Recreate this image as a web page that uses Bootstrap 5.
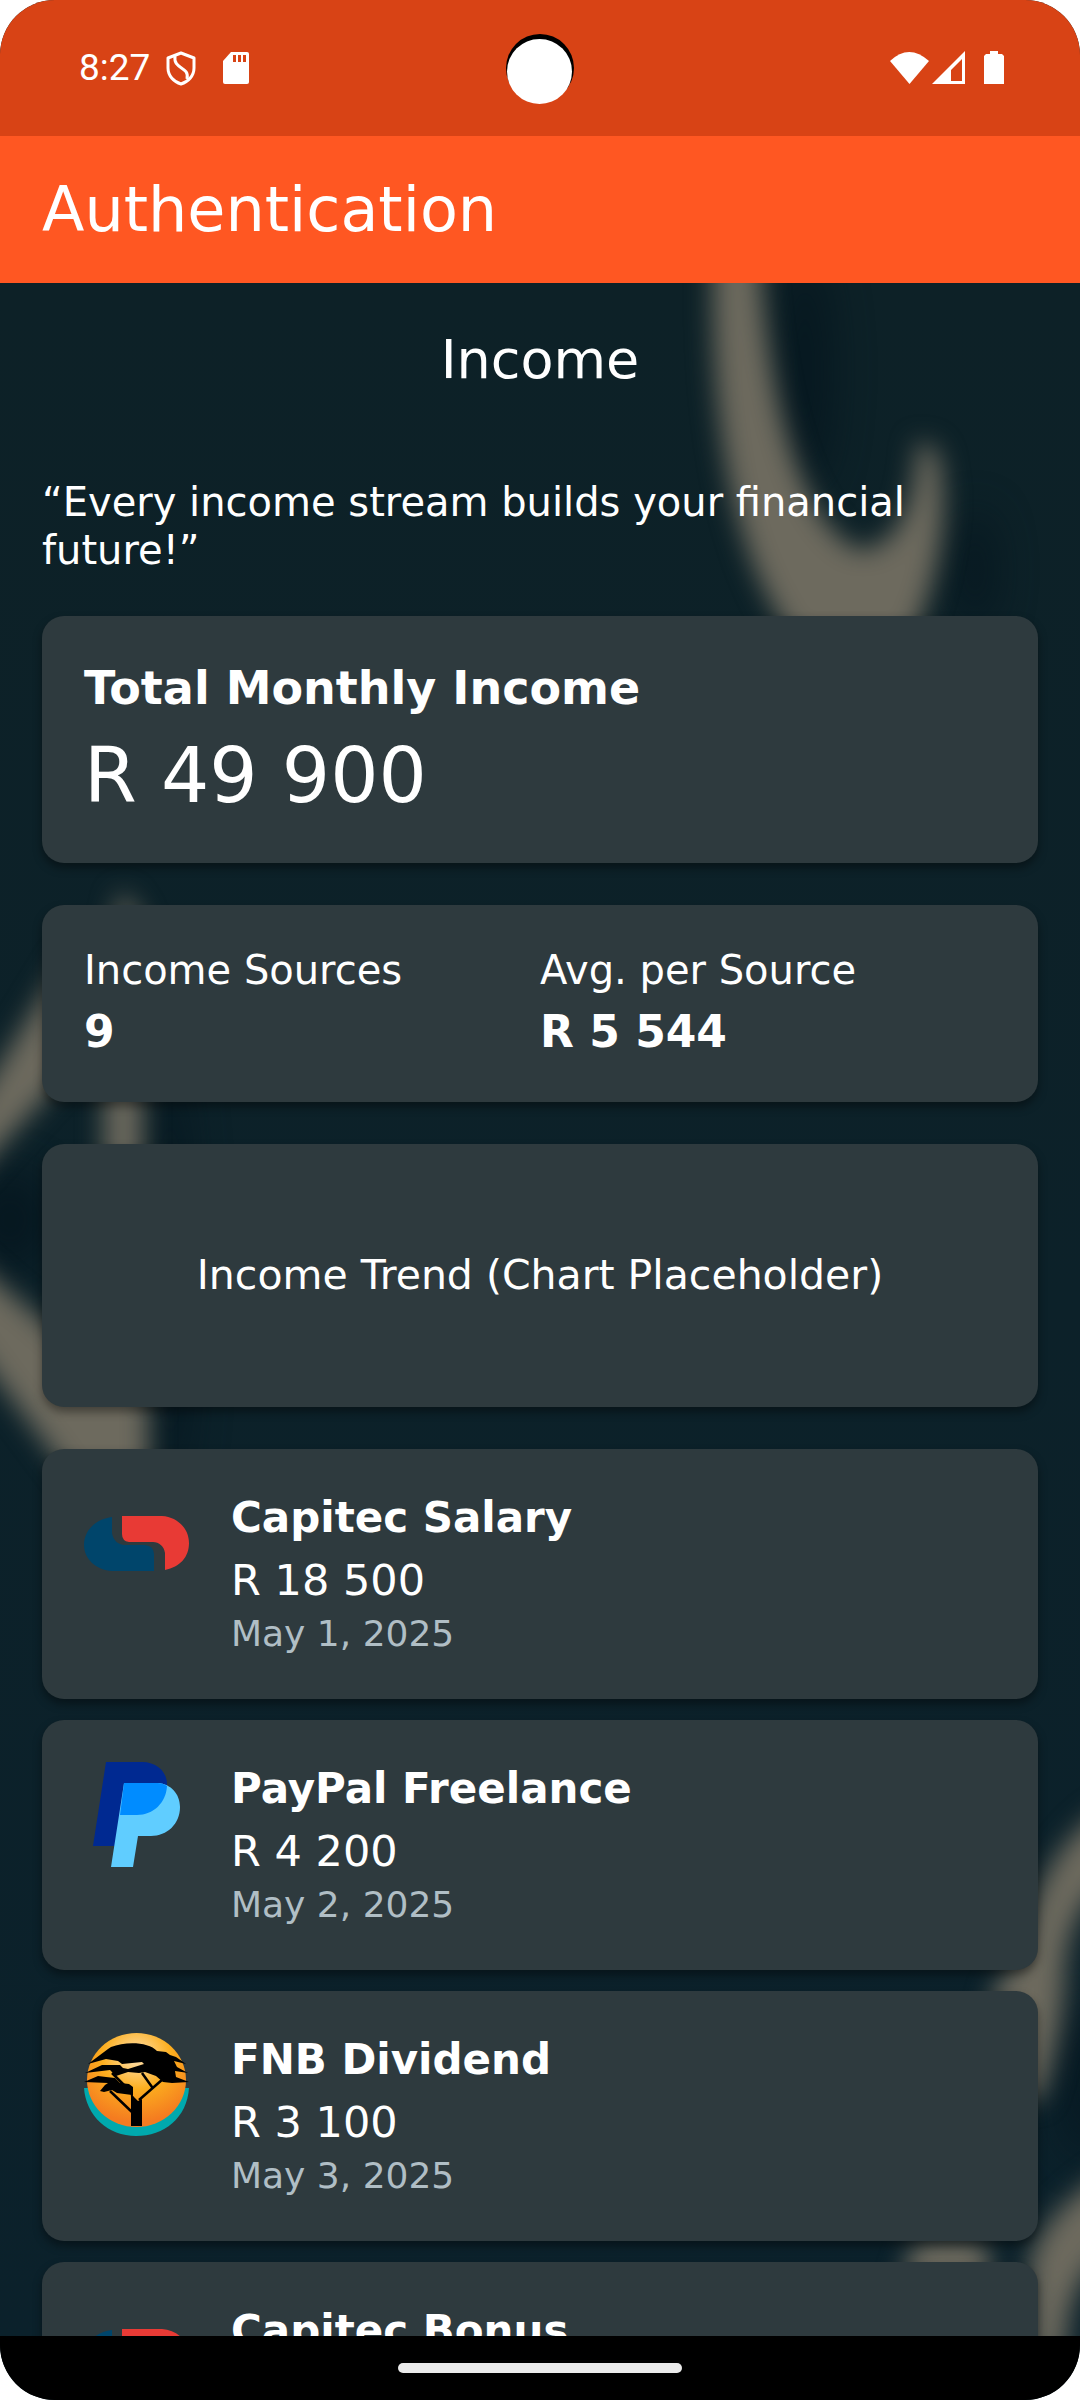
<!DOCTYPE html>
<html lang="en">
<head>
<meta charset="utf-8">
<meta name="viewport" content="width=device-width, initial-scale=1">
<title>Income</title>
<link rel="stylesheet" href="https://cdn.jsdelivr.net/npm/bootstrap@5.3.0/dist/css/bootstrap.min.css">
<style>
  body { background: #fff; font-family: "DejaVu Sans", sans-serif; color: #fff; }
  .phone { height: 100vh; border-radius: 55px; background: #0c2027; }
  .status-bar { height: 136px; padding: 0 74px 0 79px; background: #d84315; font-family: Roboto, sans-serif; font-size: 37px; line-height: 46px; }
  .camera { top: 34px; left: 50%; width: 68px; height: 68px; margin-left: -34px; background: #000; }
  .camera::after { content: ""; position: absolute; top: 5px; left: 1px; width: 65px; height: 65px; border-radius: 50%; background: #fff; }
  .app-bar { height: 147px; padding: 0 42px; background: #ff5722; font-size: 62px; line-height: 70px; }
  .screen { padding: 42px 42px 0; }
  .backdrop { inset: 0; width: 100%; height: 100%; }
  .screen-title { font-size: 54px; line-height: 70px; margin-bottom: 83px; }
  .body-text { font-size: 40px; line-height: 48px; }
  .quote { margin-bottom: 42px; }
  .panel { --bs-card-bg: #2e3a3e; --bs-card-color: #fff; --bs-card-border-width: 0; --bs-card-border-radius: 22px; padding: 42px; margin-bottom: 42px; box-shadow: 0 5px 10px rgba(0, 0, 0, .4); flex-shrink: 0; }
  .total-label { font-size: 46px; line-height: 60px; }
  .total-value { font-size: 76px; line-height: 90px; margin-top: 13px; }
  .stat-label { font-size: 40px; line-height: 46px; }
  .stat-value { font-size: 44px; line-height: 56px; margin-top: 11px; }
  .trend { height: 263px; font-size: 41px; }
  .entry { gap: 42px; margin-bottom: 21px; min-height: 250px; }
  .entry svg { width: 105px; height: 105px; flex-shrink: 0; }
  .entry-name { font-size: 42px; line-height: 54px; }
  .entry-amount { font-size: 43px; line-height: 54px; margin-top: 8px; }
  .entry-date { font-size: 36px; line-height: 46px; margin-top: 4px; color: #b0bec5; }
  .gesture-bar { height: 64px; background: #000; flex-shrink: 0; }
  .gesture-pill { width: 284px; height: 10px; background: #ebebeb; }
</style>
<script src="https://cdn.jsdelivr.net/npm/bootstrap@5.3.0/dist/js/bootstrap.bundle.min.js"></script>
</head>
<body>
<div class="phone d-flex flex-column overflow-hidden">

  <div class="status-bar position-relative d-flex align-items-center justify-content-between flex-shrink-0">
    <div class="d-flex align-items-center">
      <span>8:27</span>
      <svg class="ms-3" width="30" height="35" viewBox="0 0 30 35" fill="none" stroke="#fff" stroke-width="3" stroke-linejoin="round" aria-hidden="true">
        <path d="M15 2 28 7V17C28 25 22 31 15 33 8 31 2 25 2 17V7Z"/>
        <path d="M9 5C7 19 24 15 21 28"/>
      </svg>
      <svg class="ms-4" width="38" height="34" viewBox="4 0 38 34" aria-hidden="true">
        <path fill="#fff" d="M15 1H31Q33 1 33 3V31Q33 33 31 33H9Q7 33 7 31V10Z"/>
        <path fill="#d84315" d="M17 4h3v7h-3zM22 4h3v7h-3zM27 4h3v7h-3z"/>
      </svg>
    </div>
    <div class="camera position-absolute rounded-circle"></div>
    <svg width="116" height="34" viewBox="0 0 116 34" fill="#fff" aria-hidden="true">
      <path d="M0 10Q19 -8 39 10L19.500 33Z"/>
      <path fill-rule="evenodd" d="M42 33 75 0V33ZM61 19V30H72V8Z"/>
      <path d="M100 0h8v3h4l2 2v28H94V5l2-2h4Z"/>
    </svg>
  </div>

  <header class="app-bar d-flex align-items-center flex-shrink-0">Authentication</header>

  <main class="screen position-relative d-flex flex-column flex-grow-1 overflow-hidden">
    <svg class="backdrop position-absolute" viewBox="0 283 1080 2053" preserveAspectRatio="xMidYMin slice" aria-hidden="true">
      <defs>
        <filter id="soft" x="-20%" y="-20%" width="140%" height="140%" color-interpolation-filters="sRGB"><feGaussianBlur stdDeviation="13"/></filter>
        <filter id="haze" x="-50%" y="-50%" width="200%" height="200%" color-interpolation-filters="sRGB"><feGaussianBlur stdDeviation="22"/></filter>
        <linearGradient id="sea" x1="0" y1="0" x2="0" y2="1">
          <stop offset="0" stop-color="#0d2127"/><stop offset=".5" stop-color="#0c2129"/><stop offset="1" stop-color="#0b212b"/>
        </linearGradient>
      </defs>
      <rect y="283" width="1080" height="2053" fill="url(#sea)"/>
      <g filter="url(#haze)" fill="#03131c" opacity=".7">
        <ellipse cx="805" cy="370" rx="25" ry="120"/><ellipse cx="975" cy="570" rx="18" ry="60"/>
        <ellipse cx="170" cy="1280" rx="20" ry="220"/><ellipse cx="10" cy="1220" rx="40" ry="50"/><ellipse cx="1085" cy="2080" rx="20" ry="80"/>
      </g>
      <g filter="url(#soft)" fill="#6d6a5e">
        <path d="M714 230C707 430 735 560 795 640H910C945 570 950 490 936 450L918 440C915 490 905 545 860 550C810 530 767 430 758 230Z"/>
        <path d="M122 890 142 920V1460H104V960Z"/>
        <path d="M-40 1130 70 950V1070L-40 1190Z"/>
        <path d="M-40 1250 30 1310 110 1380 148 1400V1490H80L-40 1330Z"/>
        <path d="M1110 1805Q1040 1850 1025 1940L990 2000 1010 2100H1040Q1065 2030 1065 1960 1075 1900 1110 1880Z"/>
        <path d="M1110 2170Q1045 2210 1030 2260V2360H1065Q1065 2280 1110 2250Z"/>
        <path d="M880 2350 915 2240H985L1000 2350Z"/>
      </g>
    </svg>

    <h1 class="screen-title position-relative text-center fw-normal mt-0">Income</h1>
    <p class="quote body-text position-relative">“Every income stream builds your financial future!”</p>

    <section class="card panel">
      <div class="total-label fw-bold">Total Monthly Income</div>
      <div class="total-value">R 49 900</div>
    </section>

    <section class="card panel">
      <div class="row g-0">
        <div class="col-6">
          <div class="stat-label">Income Sources</div>
          <div class="stat-value fw-bold">9</div>
        </div>
        <div class="col-6">
          <div class="stat-label">Avg. per Source</div>
          <div class="stat-value fw-bold">R 5 544</div>
        </div>
      </div>
    </section>

    <section class="card panel trend align-items-center justify-content-center">Income Trend (Chart Placeholder)</section>

    <article class="card panel entry flex-row">
      <svg viewBox="0 0 105 105" role="img" aria-label="Capitec"><g id="capitec">
        <path fill="#00456b" d="M28 26V42C29 49 34 54 41 54H61Q70 55 70 63V80H28C12 79 0 68 0 54 0 39 12 28 28 26Z"/>
        <path fill="#e83a35" d="M38 25H78C94 26 105 38 105 52 105 66 96 76 81 79V62C80 55 75 51 69 51H45Q38 50 38 43Z"/></g>
      </svg>
      <div>
        <div class="entry-name fw-bold">Capitec Salary</div>
        <div class="entry-amount">R 18 500</div>
        <div class="entry-date">May 1, 2025</div>
      </div>
    </article>

    <article class="card panel entry flex-row">
      <svg viewBox="0 0 105 105" role="img" aria-label="PayPal">
        <path fill="#002991" d="M22 0H58C73 0 83 10 83 22 83 40 70 52 54 52H43L31 84H9Z"/>
        <path fill="#60cdff" d="M40 21H74C87 22 96 32 96 45 96 62 83 74 67 74H54L49 105H27Z"/>
        <path fill="#008cff" d="M40 21H74Q79 21 83 24C82 41 69 53 53 53H36Z"/>
      </svg>
      <div>
        <div class="entry-name fw-bold">PayPal Freelance</div>
        <div class="entry-amount">R 4 200</div>
        <div class="entry-date">May 2, 2025</div>
      </div>
    </article>

    <article class="card panel entry flex-row">
      <svg viewBox="0 0 105 105" role="img" aria-label="FNB">
        <defs><radialGradient id="sun" cx=".5" cy=".25" r=".7">
          <stop offset="0" stop-color="#ffe3b5"/><stop offset=".5" stop-color="#fcae1e"/><stop offset="1" stop-color="#f47b20"/>
        </radialGradient></defs>
        <path fill="#00a9ad" d="M0 55H105C103 85 80 103 52 103 24 103 2 83 0 55Z"/>
        <ellipse cx="52.500" cy="47" rx="49.500" ry="47" fill="url(#sun)"/>
        <path d="M4 31 24 16 27 14C42 8 65 9 73 18L82 19 86 22 92 24 102 31 90 28 93 34 104 40 91 38 92 44 105 49 88 50 79 49 72 43 61 39 55 40 44 39 32 43 26 37 1 40 18 32 36 32 39 35 44 36 60 31 58 29 38 31 34 28 22 26Z"/>
        <path d="M0 49 14 43 22 44 31 45 36 50 45 51 49 54V63L52 68 48 62 33 60 28 57 20 59 16 58 21 52 24 50Z"/>
        <path d="M46 54 49 63 54 68 58 66V93H47V64Z"/>
        <path fill="none" stroke="#000" stroke-width="2.500" d="M26 58 49 80M55 67 79 46M58 40 68 54M28 40 42 54"/>
      </svg>
      <div>
        <div class="entry-name fw-bold">FNB Dividend</div>
        <div class="entry-amount">R 3 100</div>
        <div class="entry-date">May 3, 2025</div>
      </div>
    </article>

    <article class="card panel entry flex-row">
      <svg viewBox="0 0 105 105" role="img" aria-label="Capitec"><use href="#capitec"/></svg>
      <div>
        <div class="entry-name fw-bold">Capitec Bonus</div>
      </div>
    </article>
  </main>

  <div class="gesture-bar d-flex align-items-center justify-content-center">
    <div class="gesture-pill rounded-pill"></div>
  </div>
</div>
</body>
</html>
